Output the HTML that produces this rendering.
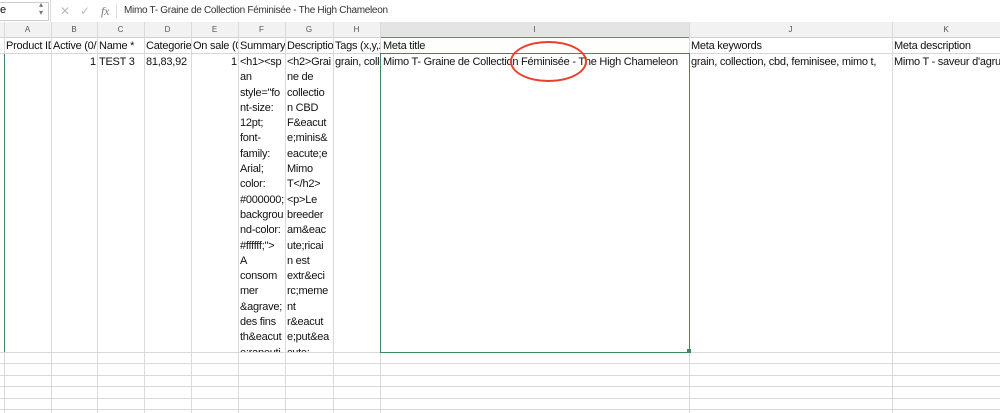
<!DOCTYPE html><html><head><style>
body{margin:0;width:1000px;height:413px;overflow:hidden;background:#fff;font-family:"Liberation Sans",sans-serif;position:relative}
.a{position:absolute}
.t{position:absolute;font-size:11px;color:#111;white-space:nowrap;overflow:hidden;letter-spacing:-0.25px}
.v{position:absolute;top:22px;width:1px;height:391px;background:#dadada}
.h{position:absolute;left:0;width:1000px;height:1px;background:#d8d8d8}
.cl{position:absolute;top:22px;height:15px;font-size:8px;color:#555;text-align:center;line-height:15px}
.ml{position:absolute;font-size:11px;line-height:15.3px;color:#111;top:55px;letter-spacing:-0.25px}
</style></head><body>
<div class="a" style="left:0;top:0;width:1000px;height:22px;background:#fff;border-bottom:1px solid #d5d5d5"></div>
<div class="a" style="left:0;top:2px;width:48px;height:17px;border:1px solid #ccc;border-left:none;background:#fff"></div>
<div class="t" style="left:0;top:4px">e</div>
<div class="t" style="left:39px;top:1px;font-size:8px;color:#777;line-height:8px">▴<br>▾</div>
<div class="a" style="left:50px;top:0;width:1px;height:22px;background:#ddd"></div>
<div class="t" style="left:60px;top:4px;color:#bbb;font-size:12px">✕</div>
<div class="t" style="left:80px;top:4px;color:#bbb;font-size:12px">✓</div>
<div class="t" style="left:101px;top:4px;color:#777;font-style:italic;font-family:'Liberation Serif',serif;font-size:12px">fx</div>
<div class="a" style="left:116px;top:4px;width:1px;height:14px;background:#ddd"></div>
<div class="t" style="left:124px;top:5px;font-size:10px;color:#333;letter-spacing:-0.3px">Mimo T- Graine de Collection Féminisée - The High Chameleon</div>
<div class="a" style="left:0;top:22px;width:1000px;height:15px;background:#f2f2f2;border-bottom:1px solid #d0d0d0"></div>
<div class="a" style="left:380px;top:22px;width:309px;height:15px;background:#e4e4e4;border-bottom:1px solid #4e9a6e"></div>
<div class="cl" style="left:4px;width:47px">A</div><div class="cl" style="left:51px;width:46px">B</div><div class="cl" style="left:97px;width:47px">C</div><div class="cl" style="left:144px;width:47px">D</div><div class="cl" style="left:191px;width:47px">E</div><div class="cl" style="left:238px;width:47px">F</div><div class="cl" style="left:285px;width:48px">G</div><div class="cl" style="left:333px;width:47px">H</div><div class="cl" style="left:380px;width:309px">I</div><div class="cl" style="left:689px;width:203px">J</div><div class="cl" style="left:892px;width:108px">K</div>
<div class="v" style="left:4px"></div><div class="v" style="left:51px"></div><div class="v" style="left:97px"></div><div class="v" style="left:144px"></div><div class="v" style="left:191px"></div><div class="v" style="left:238px"></div><div class="v" style="left:285px"></div><div class="v" style="left:333px"></div><div class="v" style="left:380px"></div><div class="v" style="left:689px"></div><div class="v" style="left:892px"></div>
<div class="a" style="left:4px;top:53px;width:1px;height:299px;background:#3d8a5c"></div>
<div class="h" style="top:53px"></div><div class="h" style="top:352px"></div><div class="h" style="top:363px"></div><div class="h" style="top:375px"></div><div class="h" style="top:386px"></div><div class="h" style="top:398px"></div><div class="h" style="top:409px"></div>
<div class="t" style="left:6px;top:40px;width:45px">Product ID</div>
<div class="t" style="left:53px;top:40px;width:44px">Active (0/1)</div>
<div class="t" style="left:99px;top:40px;width:45px">Name *</div>
<div class="t" style="left:146px;top:40px;width:45px">Categories</div>
<div class="t" style="left:193px;top:40px;width:45px">On sale (0</div>
<div class="t" style="left:240px;top:40px;width:45px">Summary</div>
<div class="t" style="left:287px;top:40px;width:46px">Description</div>
<div class="t" style="left:335px;top:40px;width:45px">Tags (x,y,z</div>
<div class="t" style="left:383px;top:40px">Meta title</div>
<div class="t" style="left:691px;top:40px">Meta keywords</div>
<div class="t" style="left:894px;top:40px;width:106px">Meta description</div>
<div class="t" style="left:90px;top:56px">1</div>
<div class="t" style="left:99px;top:56px">TEST 3</div>
<div class="t" style="left:146px;top:56px">81,83,92</div>
<div class="t" style="left:231px;top:56px">1</div>
<div class="ml" style="left:240px;width:45px;height:297px;overflow:hidden">&lt;h1&gt;&lt;sp<br>an<br>style="fo<br>nt-size:<br>12pt;<br>font-<br>family:<br>Arial;<br>color:<br>#000000;<br>backgrou<br>nd-color:<br>#ffffff;"&gt;<br>A<br>consom<br>mer<br>&amp;agrave;<br>des fins<br>th&amp;eacut<br>e;rapeuti</div>
<div class="ml" style="left:287px;width:46px;height:297px;overflow:hidden">&lt;h2&gt;Grai<br>ne de<br>collectio<br>n CBD<br>F&amp;eacut<br>e;minis&amp;<br>eacute;e<br>Mimo<br>T&lt;/h2&gt;<br>&lt;p&gt;Le<br>breeder<br>am&amp;eac<br>ute;ricai<br>n est<br>extr&amp;eci<br>rc;meme<br>nt<br>r&amp;eacut<br>e;put&amp;ea<br>cute;</div>
<div class="t" style="left:335px;top:56px;width:45px">grain, collection</div>
<div class="a" style="left:380px;top:53px;width:308px;height:298px;border:1px solid #3d8a5c"></div>
<div class="a" style="left:687px;top:349px;width:4px;height:4px;background:#3d8a5c"></div>
<div class="t" style="left:383px;top:56px">Mimo T- Graine de Collection Féminisée - The High Chameleon</div>
<div class="t" style="left:691px;top:56px;width:200px">grain, collection, cbd, feminisee, mimo t,</div>
<div class="t" style="left:894px;top:56px;width:106px">Mimo T - saveur d'agrumes</div>
<div class="a" style="left:510px;top:41px;width:73px;height:37px;border:2px solid #e8402a;border-radius:50%"></div>
</body></html>
